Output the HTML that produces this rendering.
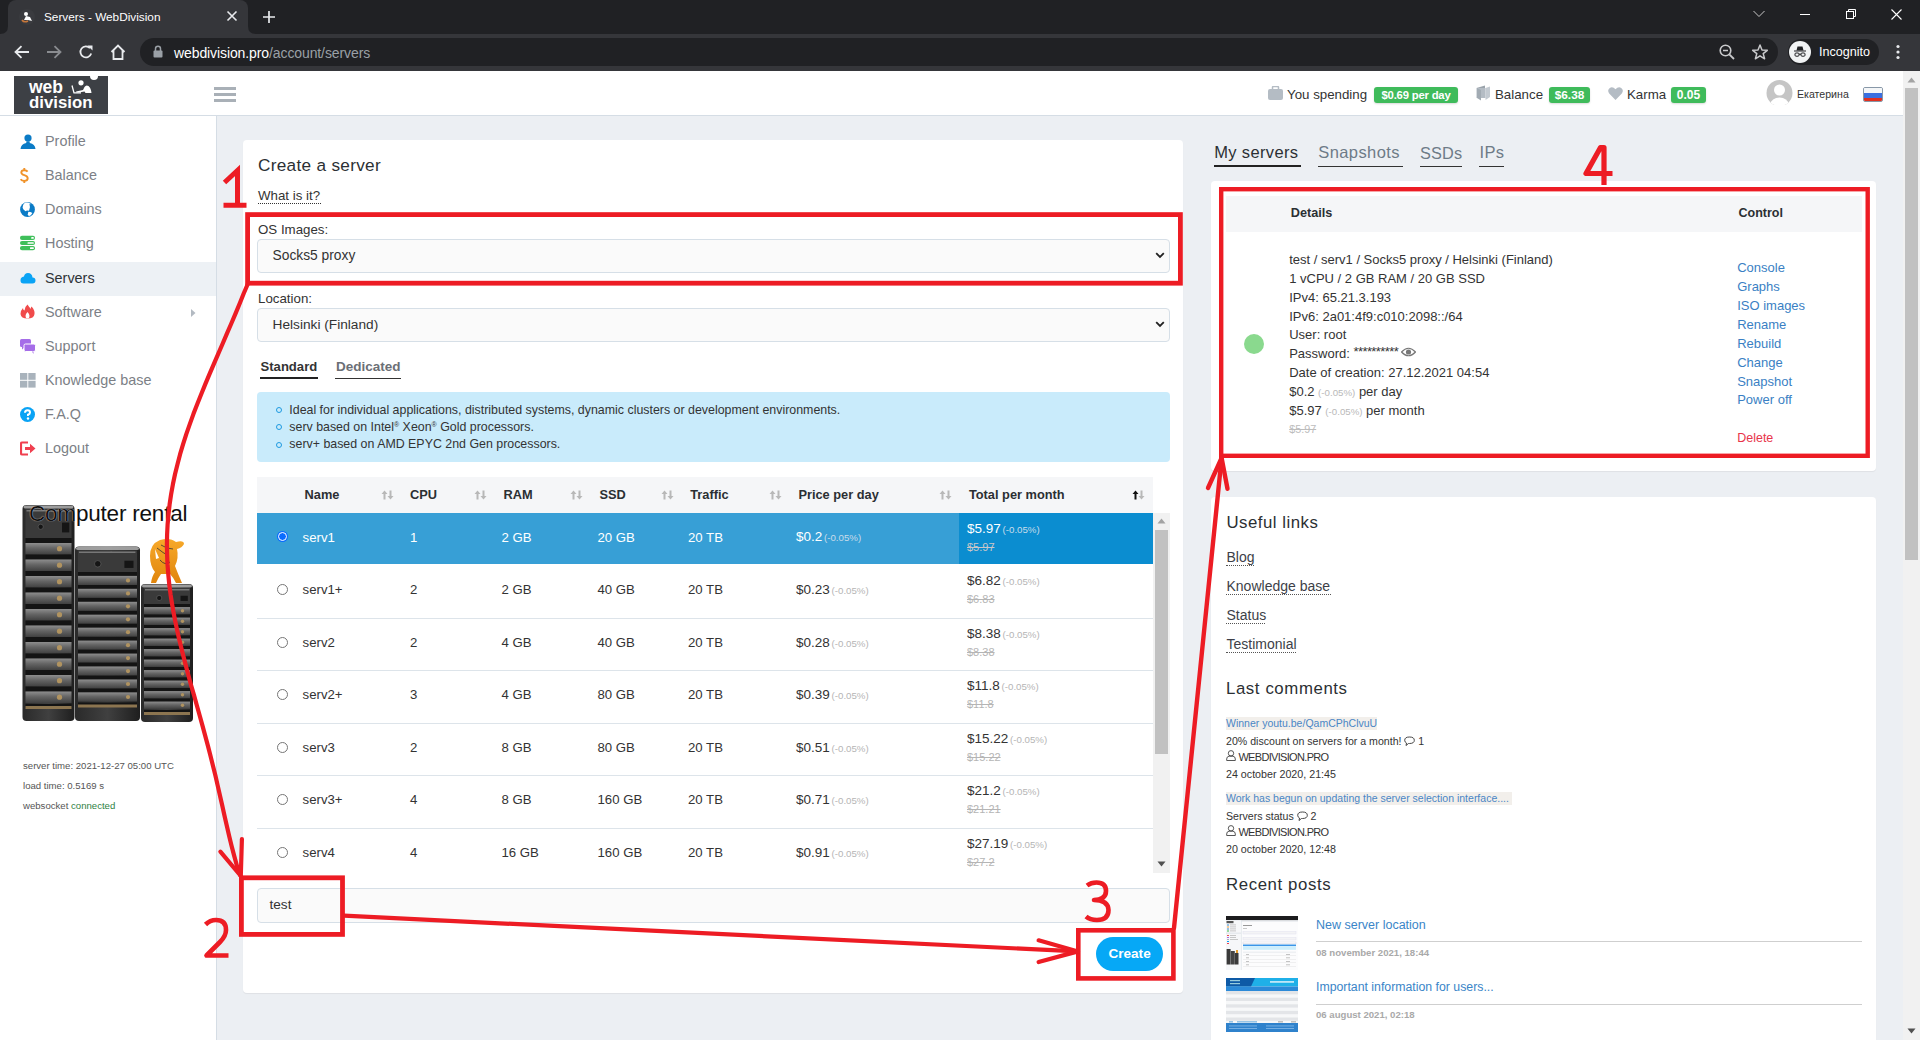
<!DOCTYPE html>
<html><head><meta charset="utf-8">
<style>
*{box-sizing:border-box;margin:0;padding:0}
html,body{width:1920px;height:1040px;overflow:hidden;font-family:"Liberation Sans",sans-serif;background:#eceff3;position:relative}
.a{position:absolute;white-space:nowrap}
/* chrome */
#tabbar{position:absolute;left:0;top:0;width:1920px;height:34px;background:#202124}
#tab{position:absolute;left:8px;top:0;width:240px;height:34px;background:#35363a;border-radius:8px 8px 0 0}
#toolbar{position:absolute;left:0;top:34px;width:1920px;height:37px;background:#35363a}
#url{position:absolute;left:140px;top:38px;width:1638px;height:28px;background:#202124;border-radius:14px}
#incog{position:absolute;left:1788px;top:39px;width:91px;height:26px;background:#202124;border-radius:13px}
/* page */
#header{position:absolute;left:0;top:71px;width:1903px;height:45px;background:#fff;border-bottom:1px solid #d5dde5}
#sidebar{position:absolute;left:0;top:116px;width:217px;height:924px;background:#fff;border-right:1px solid #d5dde5}
#pscroll{position:absolute;left:1903px;top:71px;width:17px;height:969px;background:#f1f1f1}
.sb{left:45px;font-size:14.4px;color:#7c7f86;line-height:16px}
.st{left:23px;font-size:9.6px;color:#555;line-height:11px}
.card{position:absolute;background:#fff;border-radius:4px;box-shadow:0 1px 1px rgba(0,0,0,.06)}
</style></head><body>
<div id="tabbar"></div>
<div id="tab"></div>
<svg class="a" style="left:0px;top:26px" width="8" height="8" viewBox="0 0 8 8"><path d="M0 8 Q8 8 8 0 V8Z" fill="#35363a"/></svg>
<svg class="a" style="left:248px;top:26px" width="8" height="8" viewBox="0 0 8 8"><path d="M8 8 Q0 8 0 0 V8Z" fill="#35363a"/></svg>
<div id="toolbar"></div>
<div id="url"></div>
<div id="incog"></div>

<!-- tab content -->
<svg class="a" style="left:18px;top:8px" width="18" height="18" viewBox="0 0 18 18">
 <circle cx="9" cy="9" r="8" fill="#3a3b3f"/>
 <path d="M4 12 Q6 15 10 13" stroke="#c7773a" stroke-width="1.6" fill="none"/>
 <circle cx="8" cy="6" r="2" fill="#fff"/>
 <path d="M6 12 L8 8 L12 9 L14 13 L10 12 Z" fill="#fff"/>
</svg>
<div class="a" style="left:44px;top:10px;font-size:11.8px;color:#fff">Servers - WebDivision</div>
<svg class="a" style="left:226px;top:10px" width="12" height="12" viewBox="0 0 12 12"><path d="M1.5 1.5L10.5 10.5M10.5 1.5L1.5 10.5" stroke="#e8eaed" stroke-width="1.6"/></svg>
<svg class="a" style="left:262px;top:10px" width="14" height="14" viewBox="0 0 14 14"><path d="M7 1V13M1 7H13" stroke="#e8eaed" stroke-width="1.7"/></svg>
<!-- window controls -->
<svg class="a" style="left:1752px;top:9px" width="14" height="10" viewBox="0 0 14 10"><path d="M1.5 2 L7 7.5 L12.5 2" stroke="#c8c8c8" stroke-width="1" fill="none"/></svg>
<div class="a" style="left:1800px;top:14px;width:10px;height:1px;background:#fff"></div>
<svg class="a" style="left:1845px;top:8px" width="12" height="12" viewBox="0 0 12 12"><rect x="1.5" y="3.5" width="7" height="7" stroke="#fff" fill="none" stroke-width="1"/><path d="M3.5 3.5V1.5H10.5V8.5H8.5" stroke="#fff" fill="none" stroke-width="1"/></svg>
<svg class="a" style="left:1890px;top:8px" width="13" height="13" viewBox="0 0 13 13"><path d="M1.5 1.5L11.5 11.5M11.5 1.5L1.5 11.5" stroke="#fff" stroke-width="1.1"/></svg>
<!-- toolbar icons -->
<svg class="a" style="left:13px;top:44px" width="18" height="16" viewBox="0 0 18 16"><path d="M16 8H3M8.5 2.2L2.5 8L8.5 13.8" stroke="#e8eaed" stroke-width="1.8" fill="none"/></svg>
<svg class="a" style="left:45px;top:44px" width="18" height="16" viewBox="0 0 18 16"><path d="M2 8H15M9.5 2.2L15.5 8L9.5 13.8" stroke="#8a8c90" stroke-width="1.8" fill="none"/></svg>
<svg class="a" style="left:78px;top:44px" width="16" height="16" viewBox="0 0 16 16"><path d="M13.2 9.5 A5.5 5.5 0 1 1 12 4.2" stroke="#e8eaed" stroke-width="1.8" fill="none"/><path d="M9.5 1.5 L14.5 1.5 L14.5 6.5 Z" fill="#e8eaed"/></svg>
<svg class="a" style="left:109px;top:43px" width="18" height="18" viewBox="0 0 18 18"><path d="M2.5 9 L9 2.5 L15.5 9 M4.5 7.5 V16 H13.5 V7.5" stroke="#e8eaed" stroke-width="1.8" fill="none" stroke-linejoin="miter"/></svg>
<svg class="a" style="left:153px;top:45px" width="10" height="13" viewBox="0 0 10 13"><rect x="0.5" y="5.5" width="9" height="7" rx="1" fill="#9aa0a6"/><path d="M2.5 6V3.8A2.5 2.5 0 0 1 7.5 3.8V6" stroke="#9aa0a6" stroke-width="1.5" fill="none"/></svg>
<div class="a" style="left:174px;top:45px;font-size:14px;color:#fff;letter-spacing:-0.1px">webdivision.pro<span style="color:#9aa0a6">/account/servers</span></div>
<svg class="a" style="left:1718px;top:43px" width="18" height="18" viewBox="0 0 18 18"><circle cx="7.5" cy="7.5" r="5.3" stroke="#c8c9cb" stroke-width="1.6" fill="none"/><path d="M11.3 11.3L16 16" stroke="#c8c9cb" stroke-width="1.8"/><path d="M5 7.5H10" stroke="#c8c9cb" stroke-width="1.5"/></svg>
<svg class="a" style="left:1751px;top:43px" width="18" height="18" viewBox="0 0 18 18"><path d="M9 2 L11 7 L16.3 7.3 L12.2 10.6 L13.6 15.8 L9 12.8 L4.4 15.8 L5.8 10.6 L1.7 7.3 L7 7 Z" stroke="#c8c9cb" stroke-width="1.5" fill="none" stroke-linejoin="round"/></svg>
<svg class="a" style="left:1789px;top:41px" width="22" height="22" viewBox="0 0 22 22"><circle cx="11" cy="11" r="11" fill="#f1f3f4"/><path d="M7.5 9.5 L8.5 5.5 H13.5 L14.5 9.5Z" fill="#202124"/><path d="M5 10H17" stroke="#202124" stroke-width="1"/><rect x="6" y="12" width="4" height="3.2" rx="1" stroke="#202124" fill="none" stroke-width="1"/><rect x="12" y="12" width="4" height="3.2" rx="1" stroke="#202124" fill="none" stroke-width="1"/><path d="M10 13.2H12" stroke="#202124" stroke-width="1"/></svg>
<div class="a" style="left:1819px;top:45px;font-size:12.6px;color:#fff">Incognito</div>
<svg class="a" style="left:1895px;top:44px" width="6" height="16" viewBox="0 0 6 16"><circle cx="3" cy="2.5" r="1.6" fill="#e8eaed"/><circle cx="3" cy="8" r="1.6" fill="#e8eaed"/><circle cx="3" cy="13.5" r="1.6" fill="#e8eaed"/></svg>
<div id="header"></div>
<div id="sidebar"></div>
<div class="a" style="left:0;top:262px;width:216px;height:34px;background:#edf1f5"></div>
<svg class="a" style="left:20px;top:134px" width="16" height="15" viewBox="0 0 16 15"><circle cx="8" cy="4" r="3.6" fill="#0b7bc6"/><path d="M6.5 7.2 H9.5 L9.8 9 Q15 10 15.5 15 H0.5 Q1 10 6.2 9Z" fill="#0b7bc6"/></svg>
<svg class="a" style="left:19px;top:167px" width="11" height="17" viewBox="0 0 11 17"><path d="M8.6 4.6 Q7.6 3.2 5.3 3.2 Q2.3 3.2 2.3 5.6 Q2.3 7.3 5.3 8.2 Q8.7 9.2 8.7 11.3 Q8.7 13.9 5.3 13.9 Q2.8 13.9 1.6 12.2" stroke="#f0932b" stroke-width="1.9" fill="none"/><path d="M5.3 1 V3.2 M5.3 13.9 V16" stroke="#f0932b" stroke-width="1.9"/></svg>
<svg class="a" style="left:20px;top:202px" width="15" height="15" viewBox="0 0 15 15"><circle cx="7.5" cy="7.5" r="7.4" fill="#0b7bc6"/><path d="M5.5 0.6 L8 0.5 L10.7 1.7 L9.6 3.5 L10 5 L9 8.7 L7 8.6 L5.5 9.2 L3.5 7.5 L2.6 5.8 L3 3.5 L3.8 1.7Z" fill="#fff"/><path d="M8.4 9.8 L10.5 10 L12.4 11 L11.2 12.8 L10.1 13.8 L8.6 14 L7.8 12.2Z" fill="#fff"/><path d="M9 1.8 L10.6 2.5 L10.2 3.6Z" fill="#0b7bc6"/></svg>
<svg class="a" style="left:20px;top:235px" width="15" height="16" viewBox="0 0 15 16"><rect x="0" y="0.8" width="15" height="4.2" rx="2" fill="#3fbf5a"/><rect x="0" y="6" width="15" height="4" rx="2" fill="#3fbf5a"/><rect x="0" y="11" width="15" height="4.2" rx="2" fill="#3fbf5a"/><rect x="11.2" y="2" width="2.6" height="1.8" rx=".6" fill="#fff"/><rect x="7.5" y="7.2" width="6.3" height="1.6" rx=".6" fill="#fff"/><rect x="10" y="12.2" width="3.8" height="1.8" rx=".6" fill="#fff"/></svg>
<svg class="a" style="left:20px;top:272px" width="16" height="12" viewBox="0 0 16 12"><path d="M3.5 11.5 H12.5 Q15.5 11.5 15.5 8.5 Q15.5 5.5 12.5 5.5 Q12 1 8 1 Q4.5 1 4 4.5 Q0.5 5 0.5 8.2 Q0.5 11.5 3.5 11.5Z" fill="#0aa3f5"/></svg>
<svg class="a" style="left:20px;top:304px" width="15" height="15" viewBox="0 0 15 15"><path d="M7.5 0.5 Q9 3 11 5 Q10.5 3.5 11.5 2.5 Q15 6 14.5 10 Q14 14.5 7.5 14.5 Q1 14.5 0.5 10 Q0.5 6.5 3 4 Q3 6 4.5 6.5 Q4.5 3 7.5 0.5Z" fill="#f04b4b"/><path d="M7.5 8 Q9.5 10 9.5 12 Q9.5 14.5 7.5 14.5 Q5.5 14.5 5.5 12 Q5.5 10 7.5 8Z" fill="#fff"/></svg>
<svg class="a" style="left:20px;top:339px" width="16" height="16" viewBox="0 0 16 16"><rect x="0" y="0" width="11" height="8" rx="1.5" fill="#a56de8"/><path d="M2 8 L2 10.5 L5 8Z" fill="#a56de8"/><rect x="4" y="5" width="11.5" height="7.5" rx="1.5" fill="#a56de8" stroke="#fff" stroke-width="1"/><path d="M12 12.5 L13.5 15 L13.5 12.5Z" fill="#a56de8"/></svg>
<svg class="a" style="left:20px;top:373px" width="16" height="15" viewBox="0 0 16 15"><rect x="0" y="0" width="7.3" height="6.8" fill="#a9b3bc"/><rect x="8.3" y="0" width="7.3" height="6.8" fill="#a9b3bc"/><rect x="0" y="7.8" width="7.3" height="6.8" fill="#a9b3bc"/><rect x="8.3" y="7.8" width="7.3" height="6.8" fill="#a9b3bc"/></svg>
<svg class="a" style="left:20px;top:407px" width="15" height="15" viewBox="0 0 15 15"><circle cx="7.5" cy="7.5" r="7.5" fill="#0aa3f5"/><path d="M5 5.8 Q5 3.3 7.5 3.3 Q10 3.3 10 5.5 Q10 7 8 7.8 V9" stroke="#fff" stroke-width="2" fill="none"/><circle cx="8" cy="11.5" r="1.2" fill="#fff"/></svg>
<svg class="a" style="left:20px;top:441px" width="16" height="15" viewBox="0 0 16 15"><path d="M8 1.5 H2 Q1 1.5 1 2.5 V12.5 Q1 13.5 2 13.5 H8" stroke="#f04050" stroke-width="2.2" fill="none"/><path d="M5 6 H10 V2.8 L15.5 7.5 L10 12.2 V9 H5Z" fill="#f04050"/></svg>
<div class="a sb" style="top:133px">Profile</div>
<div class="a sb" style="top:167px">Balance</div>
<div class="a sb" style="top:201px">Domains</div>
<div class="a sb" style="top:235px">Hosting</div>
<div class="a sb" style="top:270px;color:#2f3338">Servers</div>
<div class="a sb" style="top:304px">Software</div>
<svg class="a" style="left:190px;top:308px" width="6" height="10" viewBox="0 0 6 10"><path d="M1 1 L5.5 5 L1 9Z" fill="#b3bac2"/></svg>
<div class="a sb" style="top:338px">Support</div>
<div class="a sb" style="top:372px">Knowledge base</div>
<div class="a sb" style="top:406px">F.A.Q</div>
<div class="a sb" style="top:440px">Logout</div>
<svg class="a" style="left:20px;top:500px" width="180" height="225" viewBox="20 500 180 225"><defs><linearGradient id="rackg" x1="0" x2="1"><stop offset="0" stop-color="#2a2a2a"/><stop offset=".5" stop-color="#404040"/><stop offset="1" stop-color="#1e1e1e"/></linearGradient><linearGradient id="slatg" x1="0" x2="0" y1="0" y2="1"><stop offset="0" stop-color="#8e8e8e"/><stop offset=".45" stop-color="#656565"/><stop offset="1" stop-color="#404040"/></linearGradient><linearGradient id="catg" x1="0" x2="0" y1="0" y2="1"><stop offset="0" stop-color="#f7a92a"/><stop offset="1" stop-color="#e0850c"/></linearGradient></defs><g><rect x="141" y="584" width="52" height="138" rx="4" fill="url(#rackg)"/><rect x="142" y="584.5" width="50" height="3" rx="2" fill="#b0b0b0" opacity=".85"/><rect x="144" y="588" width="46" height="16" fill="#3a3a3a"/><rect x="145" y="589" width="26.0" height="1.5" fill="#777"/><rect x="169.6" y="589" width="19.76" height="1.5" fill="#777"/><circle cx="159.2" cy="598.0" r="2.6" fill="#151515" stroke="#666" stroke-width=".6"/><rect x="180.52" y="595.75" width="7.280000000000001" height="5.25" fill="#151515"/><rect x="144" y="604.0" width="46" height="3.1" fill="#141414"/><rect x="144" y="607.1" width="46" height="7.3" fill="url(#slatg)"/><circle cx="182.5" cy="610.8" r="1.7" fill="#b09360"/><rect x="144" y="614.5" width="46" height="3.1" fill="#141414"/><rect x="144" y="617.6" width="46" height="7.3" fill="url(#slatg)"/><circle cx="182.5" cy="621.3" r="1.7" fill="#b09360"/><rect x="144" y="625.0" width="46" height="3.1" fill="#141414"/><rect x="144" y="628.1" width="46" height="7.3" fill="url(#slatg)"/><circle cx="182.5" cy="631.8" r="1.7" fill="#b09360"/><rect x="144" y="635.5" width="46" height="3.1" fill="#141414"/><rect x="144" y="638.6" width="46" height="7.3" fill="url(#slatg)"/><circle cx="182.5" cy="642.3" r="1.7" fill="#b09360"/><rect x="144" y="646.0" width="46" height="3.1" fill="#141414"/><rect x="144" y="649.1" width="46" height="7.3" fill="url(#slatg)"/><circle cx="182.5" cy="652.8" r="1.7" fill="#b09360"/><rect x="144" y="656.5" width="46" height="3.1" fill="#141414"/><rect x="144" y="659.6" width="46" height="7.3" fill="url(#slatg)"/><circle cx="182.5" cy="663.3" r="1.7" fill="#b09360"/><rect x="144" y="667.0" width="46" height="3.1" fill="#141414"/><rect x="144" y="670.1" width="46" height="7.3" fill="url(#slatg)"/><circle cx="182.5" cy="673.8" r="1.7" fill="#b09360"/><rect x="144" y="677.5" width="46" height="3.1" fill="#141414"/><rect x="144" y="680.6" width="46" height="7.3" fill="url(#slatg)"/><circle cx="182.5" cy="684.3" r="1.7" fill="#b09360"/><rect x="144" y="688.0" width="46" height="3.1" fill="#141414"/><rect x="144" y="691.1" width="46" height="7.3" fill="url(#slatg)"/><circle cx="182.5" cy="694.8" r="1.7" fill="#b09360"/><rect x="144" y="698.5" width="46" height="3.1" fill="#141414"/><rect x="144" y="701.6" width="46" height="7.3" fill="url(#slatg)"/><circle cx="182.5" cy="705.3" r="1.7" fill="#b09360"/><rect x="144" y="710" width="46" height="2.3" fill="#141414"/><rect x="144" y="712" width="46" height="3" fill="#8c7550"/></g><g><rect x="75" y="546.5" width="65" height="174.5" rx="4" fill="url(#rackg)"/><rect x="76" y="547.0" width="63" height="3" rx="2" fill="#b0b0b0" opacity=".85"/><rect x="78" y="550.5" width="59" height="21.5" fill="#3a3a3a"/><rect x="79" y="551.5" width="32.5" height="1.5" fill="#777"/><rect x="110.75" y="551.5" width="24.7" height="1.5" fill="#777"/><circle cx="97.75" cy="563.8" r="3.25" fill="#151515" stroke="#666" stroke-width=".6"/><rect x="124.4" y="560.725" width="9.100000000000001" height="7.175" fill="#151515"/><rect x="78" y="572.0" width="59" height="3.9" fill="#141414"/><rect x="78" y="575.9" width="59" height="9.1" fill="url(#slatg)"/><circle cx="128" cy="580.4" r="2.1" fill="#b09360"/><rect x="78" y="585.0" width="59" height="3.9" fill="#141414"/><rect x="78" y="588.8" width="59" height="9.1" fill="url(#slatg)"/><circle cx="128" cy="593.4" r="2.1" fill="#b09360"/><rect x="78" y="597.9" width="59" height="3.9" fill="#141414"/><rect x="78" y="601.8" width="59" height="9.1" fill="url(#slatg)"/><circle cx="128" cy="606.3" r="2.1" fill="#b09360"/><rect x="78" y="610.9" width="59" height="3.9" fill="#141414"/><rect x="78" y="614.7" width="59" height="9.1" fill="url(#slatg)"/><circle cx="128" cy="619.3" r="2.1" fill="#b09360"/><rect x="78" y="623.8" width="59" height="3.9" fill="#141414"/><rect x="78" y="627.7" width="59" height="9.1" fill="url(#slatg)"/><circle cx="128" cy="632.2" r="2.1" fill="#b09360"/><rect x="78" y="636.8" width="59" height="3.9" fill="#141414"/><rect x="78" y="640.6" width="59" height="9.1" fill="url(#slatg)"/><circle cx="128" cy="645.2" r="2.1" fill="#b09360"/><rect x="78" y="649.7" width="59" height="3.9" fill="#141414"/><rect x="78" y="653.6" width="59" height="9.1" fill="url(#slatg)"/><circle cx="128" cy="658.1" r="2.1" fill="#b09360"/><rect x="78" y="662.6" width="59" height="3.9" fill="#141414"/><rect x="78" y="666.5" width="59" height="9.1" fill="url(#slatg)"/><circle cx="128" cy="671.1" r="2.1" fill="#b09360"/><rect x="78" y="675.6" width="59" height="3.9" fill="#141414"/><rect x="78" y="679.5" width="59" height="9.1" fill="url(#slatg)"/><circle cx="128" cy="684.0" r="2.1" fill="#b09360"/><rect x="78" y="688.5" width="59" height="3.9" fill="#141414"/><rect x="78" y="692.4" width="59" height="9.1" fill="url(#slatg)"/><circle cx="128" cy="697.0" r="2.1" fill="#b09360"/><rect x="78" y="702.5" width="59" height="3.5" fill="#141414"/><rect x="78" y="704.5" width="59" height="3" fill="#8c7550"/></g><g><rect x="22.5" y="505" width="52" height="216" rx="4" fill="url(#rackg)"/><rect x="23.5" y="505.5" width="50" height="3" rx="2" fill="#b0b0b0" opacity=".85"/><rect x="25.5" y="509" width="46" height="29" fill="#3a3a3a"/><rect x="26.5" y="510" width="26.0" height="1.5" fill="#777"/><rect x="51.1" y="510" width="19.76" height="1.5" fill="#777"/><circle cx="40.7" cy="526.8" r="2.6" fill="#151515" stroke="#666" stroke-width=".6"/><rect x="62.02" y="522.6" width="7.280000000000001" height="9.799999999999999" fill="#151515"/><rect x="25.5" y="538.0" width="46" height="5.0" fill="#141414"/><rect x="25.5" y="543.0" width="46" height="11.5" fill="url(#slatg)"/><circle cx="59.5" cy="548.7" r="2.6" fill="#b09360"/><rect x="25.5" y="554.5" width="46" height="5.0" fill="#141414"/><rect x="25.5" y="559.5" width="46" height="11.5" fill="url(#slatg)"/><circle cx="59.5" cy="565.2" r="2.6" fill="#b09360"/><rect x="25.5" y="571.0" width="46" height="5.0" fill="#141414"/><rect x="25.5" y="576.0" width="46" height="11.5" fill="url(#slatg)"/><circle cx="59.5" cy="581.7" r="2.6" fill="#b09360"/><rect x="25.5" y="587.5" width="46" height="5.0" fill="#141414"/><rect x="25.5" y="592.5" width="46" height="11.5" fill="url(#slatg)"/><circle cx="59.5" cy="598.2" r="2.6" fill="#b09360"/><rect x="25.5" y="604.0" width="46" height="5.0" fill="#141414"/><rect x="25.5" y="609.0" width="46" height="11.5" fill="url(#slatg)"/><circle cx="59.5" cy="614.7" r="2.6" fill="#b09360"/><rect x="25.5" y="620.5" width="46" height="5.0" fill="#141414"/><rect x="25.5" y="625.5" width="46" height="11.5" fill="url(#slatg)"/><circle cx="59.5" cy="631.2" r="2.6" fill="#b09360"/><rect x="25.5" y="637.0" width="46" height="5.0" fill="#141414"/><rect x="25.5" y="642.0" width="46" height="11.5" fill="url(#slatg)"/><circle cx="59.5" cy="647.7" r="2.6" fill="#b09360"/><rect x="25.5" y="653.5" width="46" height="5.0" fill="#141414"/><rect x="25.5" y="658.5" width="46" height="11.5" fill="url(#slatg)"/><circle cx="59.5" cy="664.2" r="2.6" fill="#b09360"/><rect x="25.5" y="670.0" width="46" height="5.0" fill="#141414"/><rect x="25.5" y="675.0" width="46" height="11.5" fill="url(#slatg)"/><circle cx="59.5" cy="680.7" r="2.6" fill="#b09360"/><rect x="25.5" y="686.5" width="46" height="5.0" fill="#141414"/><rect x="25.5" y="691.5" width="46" height="11.5" fill="url(#slatg)"/><circle cx="59.5" cy="697.2" r="2.6" fill="#b09360"/><rect x="25.5" y="704" width="46" height="3.2" fill="#141414"/><rect x="25.5" y="706" width="46" height="3" fill="#8c7550"/></g><path d="M151 583 Q152 576 155 572 Q150 566 150 556 Q150 544 160 540 Q170 537 176 542 Q184 540 184 544 Q182 548 177 549 Q179 558 175 566 Q178 574 182 583 L176 583 Q173 577 170 574 L161 574 Q158 578 156 583 Z" fill="url(#catg)"/><path d="M157 548 Q163 553 169 556 M161 545 Q167 549 173 549 M160 560 Q165 566 170 562" stroke="#333" stroke-width=".8" fill="none"/><path d="M155 549 L159 558 L156 559Z" fill="#fff"/></svg><div class="a" style="left:29px;top:502px;font-size:22.5px;line-height:24px;color:#111;letter-spacing:-0.2px;text-shadow:0 0 1px #fff">Computer rental</div>
<div class="a st" style="top:760px">server time: 2021-12-27 05:00 UTC</div>
<div class="a st" style="top:780px">load time: 0.5169 s</div>
<div class="a st" style="top:800px">websocket <span style="color:#2f8243">connected</span></div>

<div id="pscroll"></div>
<div class="a" style="left:1905px;top:88px;width:13px;height:472px;background:#c1c1c1"></div>
<svg class="a" style="left:1907px;top:77px" width="9" height="6" viewBox="0 0 9 6"><path d="M0.5 5.5 L4.5 0.5 L8.5 5.5Z" fill="#a3a3a3"/></svg>
<svg class="a" style="left:1907px;top:1028px" width="9" height="6" viewBox="0 0 9 6"><path d="M0.5 0.5 L4.5 5.5 L8.5 0.5Z" fill="#505050"/></svg>
<!-- header content -->
<div class="a" style="left:14px;top:76px;width:94px;height:38px;background:#3d4045"></div>
<div class="a" style="left:90px;top:72px;width:8px;height:8px;border-radius:50%;background:#fff"></div>
<div class="a" style="left:29px;top:79px;font-size:17.5px;font-weight:bold;color:#fff;line-height:17px">web</div>
<div class="a" style="left:29px;top:93.5px;font-size:16.8px;font-weight:bold;color:#fff;line-height:17px">division</div>
<svg class="a" style="left:71px;top:80px" width="22" height="15" viewBox="0 0 22 15"><circle cx="10" cy="2.8" r="2.6" fill="#fff"/><path d="M1 5.5 L3 12.8 H10" stroke="#fff" stroke-width="1.3" fill="none"/><path d="M5 11.5 L12 10 L13.5 7 Q15 4.5 17.5 6 Q20 8 20.5 13 H14.5 L13.5 11.5 Q9 12.5 5.5 12.5Z" fill="#fff"/></svg>
<div class="a" style="left:214px;top:87px;width:22px;height:3px;background:#a9b0b7"></div>
<div class="a" style="left:214px;top:93px;width:22px;height:3px;background:#a9b0b7"></div>
<div class="a" style="left:214px;top:99px;width:22px;height:3px;background:#a9b0b7"></div>
<svg class="a" style="left:1268px;top:86px" width="15" height="14" viewBox="0 0 15 14"><rect x="0" y="3" width="15" height="11" rx="2" fill="#b4bcc4"/><rect x="4.5" y="0.5" width="6" height="3.5" rx="1" stroke="#b4bcc4" stroke-width="1.5" fill="none"/></svg>
<div class="a" style="left:1287px;top:87px;font-size:13.3px;color:#333">You spending</div>
<div class="a" style="left:1374px;top:87px;width:84px;height:16px;border-radius:3px;background:#3fbb5b;box-shadow:0 1px 2px rgba(0,0,0,.15);color:#fff;font-weight:bold;font-size:11.3px;line-height:16px;text-align:center;letter-spacing:-0.2px">$0.69 per day</div>
<svg class="a" style="left:1476px;top:85px" width="15" height="16" viewBox="0 0 15 16"><path d="M0.5 3 L9 0.5 L9 3 Z" fill="#9aa3ab"/><rect x="0.5" y="3" width="9" height="10" fill="#b4bcc4"/><path d="M9.5 3 L14 1.5 V12 L9.5 15 Z" fill="#c3cad1"/><path d="M1 13 L5 15.5 V5 L1 3Z" fill="#a2abb3"/></svg>
<div class="a" style="left:1495px;top:87px;font-size:13.3px;color:#333">Balance</div>
<div class="a" style="left:1549px;top:87px;width:41px;height:16px;border-radius:3px;background:#3fbb5b;box-shadow:0 1px 2px rgba(0,0,0,.15);color:#fff;font-weight:bold;font-size:11.8px;line-height:16px;text-align:center">$6.38</div>
<svg class="a" style="left:1608px;top:87px" width="15" height="13" viewBox="0 0 15 13"><path d="M7.5 13 L1.2 6.5 Q-1 3.5 1.5 1.2 Q4.5 -1 7.5 2.3 Q10.5 -1 13.5 1.2 Q16 3.5 13.8 6.5 Z" fill="#b4bcc4"/></svg>
<div class="a" style="left:1627px;top:87px;font-size:13.3px;color:#333">Karma</div>
<div class="a" style="left:1671px;top:87px;width:35px;height:16px;border-radius:3px;background:#3fbb5b;box-shadow:0 1px 2px rgba(0,0,0,.15);color:#fff;font-weight:bold;font-size:12px;line-height:16px;text-align:center">0.05</div>
<svg class="a" style="left:1766px;top:80px" width="27" height="25" viewBox="0 0 27 25"><defs><clipPath id="avc"><circle cx="13.5" cy="13" r="13"/></clipPath></defs><circle cx="13.5" cy="13" r="13" fill="#c5c5c5"/><g clip-path="url(#avc)"><circle cx="13.5" cy="10" r="5.5" fill="#fff"/><ellipse cx="13.5" cy="24" rx="9" ry="6.5" fill="#fff"/></g></svg>
<div class="a" style="left:1797px;top:88px;font-size:10.6px;color:#333">Екатерина</div>
<div class="a" style="left:1863px;top:87px;width:20px;height:15px;border-radius:2px;overflow:hidden;border:1px solid #8898a8"><div style="height:4.5px;background:#f4f6f8"></div><div style="height:5px;background:#3a6fe0"></div><div style="height:5px;background:#e03020"></div></div>

<div class="card" style="left:243px;top:140px;width:940px;height:853px"></div>
<div class="card" style="left:1211px;top:181px;width:665px;height:290px"></div>
<div class="card" style="left:1211px;top:497px;width:665px;height:560px"></div>
<!--MAIN-->
<div class="a" style="left:258px;top:156.88px;font-size:17.2px;line-height:17.2px;color:#2b2f33;font-weight:400;letter-spacing:0.3px">Create a server</div>
<div class="a" style="left:258px;top:188.89px;font-size:13.3px;line-height:13.3px;color:#333;font-weight:400;">What is it?</div>
<div class="a" style="left:258px;top:203px;width:63px;height:1px;background:transparent;border-top:1px dotted #333"></div>
<div class="a" style="left:258px;top:222.69px;font-size:13.3px;line-height:13.3px;color:#333;font-weight:400;">OS Images:</div>
<div class="a" style="left:257px;top:239px;width:913px;height:34px;background:#fafafa;border:1px solid #d6dfe7;border-radius:4px"></div>
<div class="a" style="left:272.5px;top:248.77px;font-size:13.8px;line-height:13.8px;color:#333;font-weight:400;">Socks5 proxy</div>
<svg class="a" style="left:1155px;top:252px" width="10" height="7" viewBox="0 0 10 7"><path d="M1.2 1.2 L5 5 L8.8 1.2" stroke="#222" stroke-width="1.8" fill="none"/></svg>
<div class="a" style="left:258px;top:291.69px;font-size:13.3px;line-height:13.3px;color:#333;font-weight:400;">Location:</div>
<div class="a" style="left:257px;top:308px;width:913px;height:34px;background:#fafafa;border:1px solid #d6dfe7;border-radius:4px"></div>
<div class="a" style="left:272.5px;top:318.36px;font-size:13.7px;line-height:13.7px;color:#333;font-weight:400;">Helsinki (Finland)</div>
<svg class="a" style="left:1155px;top:321px" width="10" height="7" viewBox="0 0 10 7"><path d="M1.2 1.2 L5 5 L8.8 1.2" stroke="#222" stroke-width="1.8" fill="none"/></svg>
<div class="a" style="left:260.5px;top:359.87px;font-size:13.1px;line-height:13.1px;color:#333;font-weight:700;">Standard</div>
<div class="a" style="left:260px;top:377px;width:58px;height:2px;background:#222;"></div>
<div class="a" style="left:336px;top:359.52px;font-size:13.5px;line-height:13.5px;color:#6b6f76;font-weight:700;">Dedicated</div>
<div class="a" style="left:335px;top:378px;width:66px;height:1px;background:#333;"></div>
<div class="a" style="left:257px;top:392px;width:913px;height:70px;background:#c9ebfb;border-radius:4px"></div>
<div class="a" style="left:276px;top:407.0px;width:6px;height:6px;border:1.5px solid #1e9ae0;border-radius:50%"></div>
<div class="a" style="left:289.3px;top:403.96px;font-size:12.4px;line-height:12.4px;color:#333;font-weight:400;">Ideal for individual applications, distributed systems, dynamic clusters or development environments.</div>
<div class="a" style="left:276px;top:424.0px;width:6px;height:6px;border:1.5px solid #1e9ae0;border-radius:50%"></div>
<div class="a" style="left:289.3px;top:420.96px;font-size:12.4px;line-height:12.4px;color:#333;font-weight:400;">serv based on Intel<span style="font-size:7px;position:relative;top:-4px">®</span> Xeon<span style="font-size:7px;position:relative;top:-4px">®</span> Gold processors.</div>
<div class="a" style="left:276px;top:441.5px;width:6px;height:6px;border:1.5px solid #1e9ae0;border-radius:50%"></div>
<div class="a" style="left:289.3px;top:438.46px;font-size:12.4px;line-height:12.4px;color:#333;font-weight:400;">serv+ based on AMD EPYC 2nd Gen processors.</div>
<div class="a" style="left:257px;top:477px;width:896px;height:36px;background:#f5f6f8;"></div>
<div class="a" style="left:304.6px;top:488.62px;font-size:12.8px;line-height:12.8px;color:#2b2f33;font-weight:700;">Name</div>
<svg class="a" style="left:380.5px;top:490px" width="13" height="10" viewBox="0 0 13 10"><path d="M3.5 0.5 L6.5 4 H4.5 V9.5 H2.5 V4 H0.5Z" fill="#b8b8b8"/><path d="M9.5 9.5 L12.5 6 H10.5 V0.5 H8.5 V6 H6.5Z" fill="#b8b8b8"/></svg>
<div class="a" style="left:410px;top:488.62px;font-size:12.8px;line-height:12.8px;color:#2b2f33;font-weight:700;">CPU</div>
<svg class="a" style="left:474px;top:490px" width="13" height="10" viewBox="0 0 13 10"><path d="M3.5 0.5 L6.5 4 H4.5 V9.5 H2.5 V4 H0.5Z" fill="#b8b8b8"/><path d="M9.5 9.5 L12.5 6 H10.5 V0.5 H8.5 V6 H6.5Z" fill="#b8b8b8"/></svg>
<div class="a" style="left:503.5px;top:488.62px;font-size:12.8px;line-height:12.8px;color:#2b2f33;font-weight:700;">RAM</div>
<svg class="a" style="left:569.5px;top:490px" width="13" height="10" viewBox="0 0 13 10"><path d="M3.5 0.5 L6.5 4 H4.5 V9.5 H2.5 V4 H0.5Z" fill="#b8b8b8"/><path d="M9.5 9.5 L12.5 6 H10.5 V0.5 H8.5 V6 H6.5Z" fill="#b8b8b8"/></svg>
<div class="a" style="left:599.4px;top:488.62px;font-size:12.8px;line-height:12.8px;color:#2b2f33;font-weight:700;">SSD</div>
<svg class="a" style="left:660.5px;top:490px" width="13" height="10" viewBox="0 0 13 10"><path d="M3.5 0.5 L6.5 4 H4.5 V9.5 H2.5 V4 H0.5Z" fill="#b8b8b8"/><path d="M9.5 9.5 L12.5 6 H10.5 V0.5 H8.5 V6 H6.5Z" fill="#b8b8b8"/></svg>
<div class="a" style="left:690.2px;top:488.62px;font-size:12.8px;line-height:12.8px;color:#2b2f33;font-weight:700;">Traffic</div>
<svg class="a" style="left:769px;top:490px" width="13" height="10" viewBox="0 0 13 10"><path d="M3.5 0.5 L6.5 4 H4.5 V9.5 H2.5 V4 H0.5Z" fill="#b8b8b8"/><path d="M9.5 9.5 L12.5 6 H10.5 V0.5 H8.5 V6 H6.5Z" fill="#b8b8b8"/></svg>
<div class="a" style="left:798.4px;top:488.62px;font-size:12.8px;line-height:12.8px;color:#2b2f33;font-weight:700;">Price per day</div>
<svg class="a" style="left:939px;top:490px" width="13" height="10" viewBox="0 0 13 10"><path d="M3.5 0.5 L6.5 4 H4.5 V9.5 H2.5 V4 H0.5Z" fill="#b8b8b8"/><path d="M9.5 9.5 L12.5 6 H10.5 V0.5 H8.5 V6 H6.5Z" fill="#b8b8b8"/></svg>
<div class="a" style="left:968.9px;top:488.62px;font-size:12.8px;line-height:12.8px;color:#2b2f33;font-weight:700;">Total per month</div>
<svg class="a" style="left:1132px;top:490px" width="13" height="10" viewBox="0 0 13 10"><path d="M3.5 0.5 L6.5 4 H4.5 V9.5 H2.5 V4 H0.5Z" fill="#111"/><path d="M9.5 9.5 L12.5 6 H10.5 V0.5 H8.5 V6 H6.5Z" fill="#b8b8b8"/></svg>
<div class="a" style="left:257px;top:513px;width:896px;height:360px;overflow:hidden;background:#fff">
<div class="a" style="left:0px;top:0px;width:896px;height:51px;background:#379fd6;"></div>
<div class="a" style="left:701.5px;top:0px;width:194.5px;height:51px;background:#0b8dd0;"></div>
<div class="a" style="left:20.5px;top:18.5px;width:9px;height:9px;border-radius:50%;background:#0a6cff;border:1.5px solid #fff;box-shadow:0 0 0 1px #0a6cff"></div>
<div class="a" style="left:45.6px;top:17.58px;font-size:13.2px;line-height:13.2px;color:#fff;font-weight:400;">serv1</div>
<div class="a" style="left:153px;top:17.58px;font-size:13.2px;line-height:13.2px;color:#fff;font-weight:400;">1</div>
<div class="a" style="left:244.5px;top:17.58px;font-size:13.2px;line-height:13.2px;color:#fff;font-weight:400;">2 GB</div>
<div class="a" style="left:340.5px;top:17.58px;font-size:13.2px;line-height:13.2px;color:#fff;font-weight:400;">20 GB</div>
<div class="a" style="left:431px;top:17.58px;font-size:13.2px;line-height:13.2px;color:#fff;font-weight:400;">20 TB</div>
<div class="a" style="left:539px;top:17.33px;font-size:13.5px;line-height:13.5px;color:#fff">$0.2 <span style="font-size:9.7px;color:#c9dcea;margin-left:-2px">(-0.05%)</span></div>
<div class="a" style="left:710px;top:8.53px;font-size:13.5px;line-height:13.5px;color:#fff">$5.97 <span style="font-size:9.7px;color:#c9dcea;margin-left:-2px">(-0.05%)</span></div>
<div class="a" style="left:710px;top:28.65px;font-size:11px;line-height:11px;color:#c9c6c8;text-decoration:line-through">$5.97</div>
<div class="a" style="left:20px;top:71.2px;width:11px;height:11px;border-radius:50%;background:#fff;border:1px solid #767676"></div>
<div class="a" style="left:45.6px;top:70.28px;font-size:13.2px;line-height:13.2px;color:#333;font-weight:400;">serv1+</div>
<div class="a" style="left:153px;top:70.28px;font-size:13.2px;line-height:13.2px;color:#333;font-weight:400;">2</div>
<div class="a" style="left:244.5px;top:70.28px;font-size:13.2px;line-height:13.2px;color:#333;font-weight:400;">2 GB</div>
<div class="a" style="left:340.5px;top:70.28px;font-size:13.2px;line-height:13.2px;color:#333;font-weight:400;">40 GB</div>
<div class="a" style="left:431px;top:70.28px;font-size:13.2px;line-height:13.2px;color:#333;font-weight:400;">20 TB</div>
<div class="a" style="left:539px;top:70.03px;font-size:13.5px;line-height:13.5px;color:#333">$0.23 <span style="font-size:9.7px;color:#b5b5b5;margin-left:-2px">(-0.05%)</span></div>
<div class="a" style="left:710px;top:61.23px;font-size:13.5px;line-height:13.5px;color:#333">$6.82 <span style="font-size:9.7px;color:#b5b5b5;margin-left:-2px">(-0.05%)</span></div>
<div class="a" style="left:710px;top:81.35px;font-size:11px;line-height:11px;color:#b5b5b5;text-decoration:line-through">$6.83</div>
<div class="a" style="left:0px;top:104.5px;width:896px;height:1px;background:#dde4ea;"></div>
<div class="a" style="left:20px;top:123.7px;width:11px;height:11px;border-radius:50%;background:#fff;border:1px solid #767676"></div>
<div class="a" style="left:45.6px;top:122.78px;font-size:13.2px;line-height:13.2px;color:#333;font-weight:400;">serv2</div>
<div class="a" style="left:153px;top:122.78px;font-size:13.2px;line-height:13.2px;color:#333;font-weight:400;">2</div>
<div class="a" style="left:244.5px;top:122.78px;font-size:13.2px;line-height:13.2px;color:#333;font-weight:400;">4 GB</div>
<div class="a" style="left:340.5px;top:122.78px;font-size:13.2px;line-height:13.2px;color:#333;font-weight:400;">40 GB</div>
<div class="a" style="left:431px;top:122.78px;font-size:13.2px;line-height:13.2px;color:#333;font-weight:400;">20 TB</div>
<div class="a" style="left:539px;top:122.53px;font-size:13.5px;line-height:13.5px;color:#333">$0.28 <span style="font-size:9.7px;color:#b5b5b5;margin-left:-2px">(-0.05%)</span></div>
<div class="a" style="left:710px;top:113.73px;font-size:13.5px;line-height:13.5px;color:#333">$8.38 <span style="font-size:9.7px;color:#b5b5b5;margin-left:-2px">(-0.05%)</span></div>
<div class="a" style="left:710px;top:133.85px;font-size:11px;line-height:11px;color:#b5b5b5;text-decoration:line-through">$8.38</div>
<div class="a" style="left:0px;top:157.0px;width:896px;height:1px;background:#dde4ea;"></div>
<div class="a" style="left:20px;top:176.2px;width:11px;height:11px;border-radius:50%;background:#fff;border:1px solid #767676"></div>
<div class="a" style="left:45.6px;top:175.28px;font-size:13.2px;line-height:13.2px;color:#333;font-weight:400;">serv2+</div>
<div class="a" style="left:153px;top:175.28px;font-size:13.2px;line-height:13.2px;color:#333;font-weight:400;">3</div>
<div class="a" style="left:244.5px;top:175.28px;font-size:13.2px;line-height:13.2px;color:#333;font-weight:400;">4 GB</div>
<div class="a" style="left:340.5px;top:175.28px;font-size:13.2px;line-height:13.2px;color:#333;font-weight:400;">80 GB</div>
<div class="a" style="left:431px;top:175.28px;font-size:13.2px;line-height:13.2px;color:#333;font-weight:400;">20 TB</div>
<div class="a" style="left:539px;top:175.03px;font-size:13.5px;line-height:13.5px;color:#333">$0.39 <span style="font-size:9.7px;color:#b5b5b5;margin-left:-2px">(-0.05%)</span></div>
<div class="a" style="left:710px;top:166.22px;font-size:13.5px;line-height:13.5px;color:#333">$11.8 <span style="font-size:9.7px;color:#b5b5b5;margin-left:-2px">(-0.05%)</span></div>
<div class="a" style="left:710px;top:186.35px;font-size:11px;line-height:11px;color:#b5b5b5;text-decoration:line-through">$11.8</div>
<div class="a" style="left:0px;top:209.5px;width:896px;height:1px;background:#dde4ea;"></div>
<div class="a" style="left:20px;top:228.7px;width:11px;height:11px;border-radius:50%;background:#fff;border:1px solid #767676"></div>
<div class="a" style="left:45.6px;top:227.78px;font-size:13.2px;line-height:13.2px;color:#333;font-weight:400;">serv3</div>
<div class="a" style="left:153px;top:227.78px;font-size:13.2px;line-height:13.2px;color:#333;font-weight:400;">2</div>
<div class="a" style="left:244.5px;top:227.78px;font-size:13.2px;line-height:13.2px;color:#333;font-weight:400;">8 GB</div>
<div class="a" style="left:340.5px;top:227.78px;font-size:13.2px;line-height:13.2px;color:#333;font-weight:400;">80 GB</div>
<div class="a" style="left:431px;top:227.78px;font-size:13.2px;line-height:13.2px;color:#333;font-weight:400;">20 TB</div>
<div class="a" style="left:539px;top:227.53px;font-size:13.5px;line-height:13.5px;color:#333">$0.51 <span style="font-size:9.7px;color:#b5b5b5;margin-left:-2px">(-0.05%)</span></div>
<div class="a" style="left:710px;top:218.72px;font-size:13.5px;line-height:13.5px;color:#333">$15.22 <span style="font-size:9.7px;color:#b5b5b5;margin-left:-2px">(-0.05%)</span></div>
<div class="a" style="left:710px;top:238.85px;font-size:11px;line-height:11px;color:#b5b5b5;text-decoration:line-through">$15.22</div>
<div class="a" style="left:0px;top:262.0px;width:896px;height:1px;background:#dde4ea;"></div>
<div class="a" style="left:20px;top:281.2px;width:11px;height:11px;border-radius:50%;background:#fff;border:1px solid #767676"></div>
<div class="a" style="left:45.6px;top:280.28px;font-size:13.2px;line-height:13.2px;color:#333;font-weight:400;">serv3+</div>
<div class="a" style="left:153px;top:280.28px;font-size:13.2px;line-height:13.2px;color:#333;font-weight:400;">4</div>
<div class="a" style="left:244.5px;top:280.28px;font-size:13.2px;line-height:13.2px;color:#333;font-weight:400;">8 GB</div>
<div class="a" style="left:340.5px;top:280.28px;font-size:13.2px;line-height:13.2px;color:#333;font-weight:400;">160 GB</div>
<div class="a" style="left:431px;top:280.28px;font-size:13.2px;line-height:13.2px;color:#333;font-weight:400;">20 TB</div>
<div class="a" style="left:539px;top:280.02px;font-size:13.5px;line-height:13.5px;color:#333">$0.71 <span style="font-size:9.7px;color:#b5b5b5;margin-left:-2px">(-0.05%)</span></div>
<div class="a" style="left:710px;top:271.22px;font-size:13.5px;line-height:13.5px;color:#333">$21.2 <span style="font-size:9.7px;color:#b5b5b5;margin-left:-2px">(-0.05%)</span></div>
<div class="a" style="left:710px;top:291.35px;font-size:11px;line-height:11px;color:#b5b5b5;text-decoration:line-through">$21.21</div>
<div class="a" style="left:0px;top:314.5px;width:896px;height:1px;background:#dde4ea;"></div>
<div class="a" style="left:20px;top:333.7px;width:11px;height:11px;border-radius:50%;background:#fff;border:1px solid #767676"></div>
<div class="a" style="left:45.6px;top:332.78px;font-size:13.2px;line-height:13.2px;color:#333;font-weight:400;">serv4</div>
<div class="a" style="left:153px;top:332.78px;font-size:13.2px;line-height:13.2px;color:#333;font-weight:400;">4</div>
<div class="a" style="left:244.5px;top:332.78px;font-size:13.2px;line-height:13.2px;color:#333;font-weight:400;">16 GB</div>
<div class="a" style="left:340.5px;top:332.78px;font-size:13.2px;line-height:13.2px;color:#333;font-weight:400;">160 GB</div>
<div class="a" style="left:431px;top:332.78px;font-size:13.2px;line-height:13.2px;color:#333;font-weight:400;">20 TB</div>
<div class="a" style="left:539px;top:332.52px;font-size:13.5px;line-height:13.5px;color:#333">$0.91 <span style="font-size:9.7px;color:#b5b5b5;margin-left:-2px">(-0.05%)</span></div>
<div class="a" style="left:710px;top:323.72px;font-size:13.5px;line-height:13.5px;color:#333">$27.19 <span style="font-size:9.7px;color:#b5b5b5;margin-left:-2px">(-0.05%)</span></div>
<div class="a" style="left:710px;top:343.85px;font-size:11px;line-height:11px;color:#b5b5b5;text-decoration:line-through">$27.2</div>
<div class="a" style="left:0px;top:367.0px;width:896px;height:1px;background:#dde4ea;"></div>
<div class="a" style="left:20px;top:386.2px;width:11px;height:11px;border-radius:50%;background:#fff;border:1px solid #767676"></div>
<div class="a" style="left:45.6px;top:385.28px;font-size:13.2px;line-height:13.2px;color:#333;font-weight:400;">serv5</div>
<div class="a" style="left:153px;top:385.28px;font-size:13.2px;line-height:13.2px;color:#333;font-weight:400;">8</div>
<div class="a" style="left:244.5px;top:385.28px;font-size:13.2px;line-height:13.2px;color:#333;font-weight:400;">32 GB</div>
<div class="a" style="left:340.5px;top:385.28px;font-size:13.2px;line-height:13.2px;color:#333;font-weight:400;">240 GB</div>
<div class="a" style="left:431px;top:385.28px;font-size:13.2px;line-height:13.2px;color:#333;font-weight:400;">20 TB</div>
<div class="a" style="left:539px;top:385.02px;font-size:13.5px;line-height:13.5px;color:#333">$1.82 <span style="font-size:9.7px;color:#b5b5b5;margin-left:-2px">(-0.05%)</span></div>
<div class="a" style="left:710px;top:376.22px;font-size:13.5px;line-height:13.5px;color:#333">$54.4 <span style="font-size:9.7px;color:#b5b5b5;margin-left:-2px">(-0.05%)</span></div>
<div class="a" style="left:710px;top:396.35px;font-size:11px;line-height:11px;color:#b5b5b5;text-decoration:line-through">$54.4</div>
</div>
<div class="a" style="left:1153px;top:513px;width:17px;height:360px;background:#f1f1f1;"></div>
<div class="a" style="left:1155px;top:530px;width:13px;height:224px;background:#c1c1c1;"></div>
<svg class="a" style="left:1157px;top:518px" width="9" height="6" viewBox="0 0 9 6"><path d="M0.5 5.5 L4.5 0.5 L8.5 5.5Z" fill="#a3a3a3"/></svg>
<svg class="a" style="left:1157px;top:861px" width="9" height="6" viewBox="0 0 9 6"><path d="M0.5 0.5 L4.5 5.5 L8.5 0.5Z" fill="#505050"/></svg>
<div class="a" style="left:257px;top:888px;width:913px;height:35px;background:#fafafa;border:1px solid #d6dfe7;border-radius:4px"></div>
<div class="a" style="left:269.5px;top:897.64px;font-size:13.6px;line-height:13.6px;color:#333;font-weight:400;">test</div>
<div class="a" style="left:1096px;top:937px;width:67px;height:34px;border-radius:17px;background:#06a8f6"></div>
<div class="a" style="left:1108.4px;top:946.74px;font-size:13.6px;line-height:13.6px;color:#fff;font-weight:700;">Create</div>
<!--/MAIN-->
<!--RIGHT-->
<div class="a" style="left:1214.2px;top:144.47px;font-size:16.5px;line-height:16.5px;color:#2b2f33;font-weight:400;letter-spacing:0.35px">My servers</div>
<div class="a" style="left:1214px;top:165px;width:87px;height:2px;background:#222;"></div>
<div class="a" style="left:1318.3px;top:144.47px;font-size:16.5px;line-height:16.5px;color:#6e7b87;font-weight:400;letter-spacing:0.4px">Snapshots</div>
<div class="a" style="left:1318px;top:166px;width:85px;height:1px;background:#333;"></div>
<div class="a" style="left:1420px;top:144.65px;font-size:16.3px;line-height:16.3px;color:#6e7b87;font-weight:400;letter-spacing:0.2px">SSDs</div>
<div class="a" style="left:1420px;top:166px;width:42px;height:1px;background:#333;"></div>
<div class="a" style="left:1479.5px;top:144.47px;font-size:16.5px;line-height:16.5px;color:#6e7b87;font-weight:400;letter-spacing:0.3px">IPs</div>
<div class="a" style="left:1479px;top:166px;width:25px;height:1px;background:#333;"></div>
<div class="a" style="left:1226px;top:196px;width:636px;height:36px;background:#f5f6f8;"></div>
<div class="a" style="left:1290.8px;top:207.21px;font-size:12.7px;line-height:12.7px;color:#2b2f33;font-weight:700;">Details</div>
<div class="a" style="left:1738.5px;top:207.38px;font-size:12.5px;line-height:12.5px;color:#2b2f33;font-weight:700;">Control</div>
<div class="a" style="left:1243.5px;top:333.5px;width:20px;height:20px;border-radius:50%;background:#8ad98e"></div>
<div class="a" style="left:1289.2px;top:253.25px;font-size:13px;line-height:13px;color:#333;font-weight:400;">test / serv1 / Socks5 proxy / Helsinki (Finland)</div>
<div class="a" style="left:1289.2px;top:272.05px;font-size:13px;line-height:13px;color:#333;font-weight:400;">1 vCPU / 2 GB RAM / 20 GB SSD</div>
<div class="a" style="left:1289.2px;top:290.85px;font-size:13px;line-height:13px;color:#333;font-weight:400;">IPv4: 65.21.3.193</div>
<div class="a" style="left:1289.2px;top:309.65px;font-size:13px;line-height:13px;color:#333;font-weight:400;">IPv6: 2a01:4f9:c010:2098::/64</div>
<div class="a" style="left:1289.2px;top:328.35px;font-size:13px;line-height:13px;color:#333;font-weight:400;">User: root</div>
<div class="a" style="left:1289.2px;top:347.05px;font-size:13px;line-height:13px;color:#333;font-weight:400;">Password: <span style="font-size:13px;position:relative;top:-2px;letter-spacing:-0.6px">**********</span></div>
<div class="a" style="left:1289.2px;top:366.05px;font-size:13px;line-height:13px;color:#333;font-weight:400;">Date of creation: 27.12.2021 04:54</div>
<div class="a" style="left:1289.2px;top:385.05px;font-size:13px;line-height:13px;color:#333;font-weight:400;">$0.2 <span style="font-size:9.7px;color:#b9b9b9">(-0.05%)</span> per day</div>
<div class="a" style="left:1289.2px;top:403.85px;font-size:13px;line-height:13px;color:#333;font-weight:400;">$5.97 <span style="font-size:9.7px;color:#b9b9b9">(-0.05%)</span> per month</div>
<div class="a" style="left:1289.2px;top:423.82px;font-size:10.8px;line-height:10.8px;color:#bdbdbd;font-weight:400;text-decoration:line-through">$5.97</div>
<svg class="a" style="left:1401px;top:347px" width="15" height="10" viewBox="0 0 15 10"><path d="M0.5 5 Q7.5 -2.5 14.5 5 Q7.5 12.5 0.5 5Z" fill="none" stroke="#777" stroke-width="1.2"/><circle cx="7.5" cy="5" r="2.6" fill="#777"/></svg>
<div class="a" style="left:1737.2px;top:261.45px;font-size:13px;line-height:13px;color:#3a7fc4;font-weight:400;">Console</div>
<div class="a" style="left:1737.2px;top:280.30px;font-size:13px;line-height:13px;color:#3a7fc4;font-weight:400;">Graphs</div>
<div class="a" style="left:1737.2px;top:299.15px;font-size:13px;line-height:13px;color:#3a7fc4;font-weight:400;">ISO images</div>
<div class="a" style="left:1737.2px;top:318.00px;font-size:13px;line-height:13px;color:#3a7fc4;font-weight:400;">Rename</div>
<div class="a" style="left:1737.2px;top:336.85px;font-size:13px;line-height:13px;color:#3a7fc4;font-weight:400;">Rebuild</div>
<div class="a" style="left:1737.2px;top:355.70px;font-size:13px;line-height:13px;color:#3a7fc4;font-weight:400;">Change</div>
<div class="a" style="left:1737.2px;top:374.55px;font-size:13px;line-height:13px;color:#3a7fc4;font-weight:400;">Snapshot</div>
<div class="a" style="left:1737.2px;top:393.40px;font-size:13px;line-height:13px;color:#3a7fc4;font-weight:400;">Power off</div>
<div class="a" style="left:1737.2px;top:431.88px;font-size:12.5px;line-height:12.5px;color:#e8344a;font-weight:400;">Delete</div>
<div class="a" style="left:1226.5px;top:514.72px;font-size:16.8px;line-height:16.8px;color:#2b2f33;font-weight:400;letter-spacing:0.5px">Useful links</div>
<div class="a" style="left:1226.5px;top:550.30px;font-size:14px;line-height:14px;color:#3d3f48;font-weight:400;">Blog</div>
<div class="a" style="left:1226px;top:565.4000000000001px;width:28px;height:1px;background:transparent;border-top:1px dotted #555"></div>
<div class="a" style="left:1226.5px;top:579.10px;font-size:14px;line-height:14px;color:#3d3f48;font-weight:400;">Knowledge base</div>
<div class="a" style="left:1226px;top:594.2px;width:105px;height:1px;background:transparent;border-top:1px dotted #555"></div>
<div class="a" style="left:1226.5px;top:607.90px;font-size:14px;line-height:14px;color:#3d3f48;font-weight:400;">Status</div>
<div class="a" style="left:1226px;top:623.0px;width:39px;height:1px;background:transparent;border-top:1px dotted #555"></div>
<div class="a" style="left:1226.5px;top:636.80px;font-size:14px;line-height:14px;color:#3d3f48;font-weight:400;">Testimonial</div>
<div class="a" style="left:1226px;top:651.9000000000001px;width:70px;height:1px;background:transparent;border-top:1px dotted #555"></div>
<div class="a" style="left:1226px;top:680.72px;font-size:16.8px;line-height:16.8px;color:#2b2f33;font-weight:400;letter-spacing:0.6px">Last comments</div>
<div class="a" style="left:1226px;top:717px;width:151px;height:12.8px;background:#f2efeb;"></div>
<div class="a" style="left:1226px;top:718.08px;font-size:10.5px;line-height:10.5px;color:#4a86c5;font-weight:400;">Winner youtu.be/QamCPhClvuU</div>
<div class="a" style="left:1226px;top:735.59px;font-size:10.6px;line-height:10.6px;color:#333;font-weight:400;">20% discount on servers for a month! <svg width="11" height="10" viewBox="0 0 11 10" style="vertical-align:-1px"><path d="M5.5 1 Q10.3 1 10.3 4.3 Q10.3 7.5 5.5 7.5 L4.5 7.5 L2 9.5 L2.5 7 Q0.7 6.2 0.7 4.3 Q0.7 1 5.5 1Z" fill="none" stroke="#333" stroke-width="0.9"/></svg> 1</div>
<svg class="a" style="left:1226px;top:750.0px" width="10" height="11" viewBox="0 0 10 11"><circle cx="5" cy="3.3" r="2.7" fill="none" stroke="#444" stroke-width="0.9"/><path d="M0.7 10.5 V9 Q0.7 6.5 3 6.2 H7 Q9.3 6.5 9.3 9 V10.5 Z" fill="none" stroke="#444" stroke-width="0.9"/></svg>
<div class="a" style="left:1238.4px;top:751.95px;font-size:11px;line-height:11px;color:#333;font-weight:400;letter-spacing:-0.68px">WEBDIVISION.PRO</div>
<div class="a" style="left:1226px;top:768.80px;font-size:10.7px;line-height:10.7px;color:#333;font-weight:400;">24 october 2020, 21:45</div>
<div class="a" style="left:1226px;top:792px;width:286px;height:12.8px;background:#f2efeb;"></div>
<div class="a" style="left:1226px;top:793.08px;font-size:10.5px;line-height:10.5px;color:#4a86c5;font-weight:400;">Work has begun on updating the server selection interface....</div>
<div class="a" style="left:1226px;top:810.59px;font-size:10.6px;line-height:10.6px;color:#333;font-weight:400;">Servers status <svg width="11" height="10" viewBox="0 0 11 10" style="vertical-align:-1px"><path d="M5.5 1 Q10.3 1 10.3 4.3 Q10.3 7.5 5.5 7.5 L4.5 7.5 L2 9.5 L2.5 7 Q0.7 6.2 0.7 4.3 Q0.7 1 5.5 1Z" fill="none" stroke="#333" stroke-width="0.9"/></svg> 2</div>
<svg class="a" style="left:1226px;top:825.0px" width="10" height="11" viewBox="0 0 10 11"><circle cx="5" cy="3.3" r="2.7" fill="none" stroke="#444" stroke-width="0.9"/><path d="M0.7 10.5 V9 Q0.7 6.5 3 6.2 H7 Q9.3 6.5 9.3 9 V10.5 Z" fill="none" stroke="#444" stroke-width="0.9"/></svg>
<div class="a" style="left:1238.4px;top:826.95px;font-size:11px;line-height:11px;color:#333;font-weight:400;letter-spacing:-0.68px">WEBDIVISION.PRO</div>
<div class="a" style="left:1226px;top:843.80px;font-size:10.7px;line-height:10.7px;color:#333;font-weight:400;">20 october 2020, 12:48</div>
<div class="a" style="left:1226px;top:877.12px;font-size:16.8px;line-height:16.8px;color:#2b2f33;font-weight:400;letter-spacing:0.6px">Recent posts</div>
<svg class="a" style="left:1226px;top:916px" width="72" height="54" viewBox="0 0 72 54">
<rect width="72" height="54" fill="#fcfcfd"/><rect width="72" height="4.3" fill="#1c1c1e"/><rect x="0" y="4.3" width="72" height="1.5" fill="#e9ecef"/><rect x="0" y="4.3" width="15" height="50" fill="#f6f7f9"/><rect x="15" y="4.3" width="0.6" height="50" fill="#dde3e8"/>
<rect x="0.5" y="5" width="7" height="2.2" fill="#555"/>
<rect x="1" y="8.5" width="2" height="1" fill="#3a8fd0"/><rect x="1" y="10.5" width="2" height="1" fill="#f0a040"/><rect x="1" y="12.5" width="2" height="1" fill="#3a8fd0"/><rect x="1" y="14.5" width="2" height="1" fill="#3dba4e"/><rect x="0" y="16.5" width="15" height="1.5" fill="#e6eaee"/><rect x="1" y="19" width="2" height="1" fill="#f04b4b"/><rect x="1" y="21" width="2" height="1" fill="#a56de8"/><rect x="1" y="23" width="2" height="1" fill="#aab"/><rect x="1" y="25" width="2" height="1" fill="#0aa3f5"/><rect x="1" y="27" width="2" height="1" fill="#f04050"/>
<rect x="4" y="8.5" width="6" height=".8" fill="#bbb"/><rect x="4" y="10.5" width="6" height=".8" fill="#bbb"/><rect x="4" y="12.5" width="6" height=".8" fill="#bbb"/><rect x="4" y="14.5" width="6" height=".8" fill="#bbb"/><rect x="4" y="19" width="6" height=".8" fill="#bbb"/><rect x="4" y="21" width="6" height=".8" fill="#bbb"/><rect x="4" y="23" width="8" height=".8" fill="#bbb"/>
<rect x="0.6" y="33" width="4" height="15.5" fill="#3a3a3a"/><rect x="4.8" y="35" width="4" height="13.5" fill="#444"/><rect x="9" y="37" width="3.5" height="11.5" fill="#3a3a3a"/><rect x="10" y="34" width="2" height="3" fill="#e8a030"/>
<rect x="17" y="9" width="9" height="1" fill="#999"/><rect x="17" y="12" width="4" height=".8" fill="#bbb"/><rect x="17" y="15.5" width="53" height="2.5" fill="#f4f4f6" stroke="#dde" stroke-width=".4"/><rect x="17" y="21.5" width="53" height="2.5" fill="#f4f4f6" stroke="#dde" stroke-width=".4"/>
<rect x="17" y="26" width="53" height="1.8" fill="#fff" stroke="#ccd" stroke-width=".4"/>
<rect x="17" y="28.5" width="53" height="1.6" fill="#3b95e8"/><rect x="17" y="30.2" width="53" height="3.6" fill="#cdeefc"/>
<rect x="17" y="35.5" width="53" height="1.6" fill="#eef0f3"/><rect x="17" y="39.5" width="53" height=".5" fill="#e2e2e2"/><rect x="17" y="43" width="53" height=".5" fill="#e2e2e2"/><rect x="17" y="46.5" width="53" height=".5" fill="#e2e2e2"/><rect x="17" y="50" width="53" height=".5" fill="#e2e2e2"/>
<rect x="20" y="38" width="3" height=".7" fill="#aaa"/><rect x="20" y="41.5" width="3" height=".7" fill="#aaa"/><rect x="20" y="45" width="3" height=".7" fill="#aaa"/><rect x="20" y="48.5" width="3" height=".7" fill="#aaa"/>
<rect x="60" y="38" width="4" height=".7" fill="#aaa"/><rect x="60" y="41.5" width="4" height=".7" fill="#aaa"/><rect x="60" y="45" width="4" height=".7" fill="#aaa"/><rect x="60" y="48.5" width="4" height=".7" fill="#aaa"/>
</svg>
<svg class="a" style="left:1226px;top:978px" width="72" height="54" viewBox="0 0 72 54">
<rect width="72" height="54" fill="#f7f8f9"/><rect width="72" height="8.5" fill="#1fb0e8"/><path d="M0 0 H29 L25 8.5 H0Z" fill="#0e5aa6"/><rect x="4" y="2" width="10" height="1.2" fill="#9cd"/><rect x="4" y="5" width="10" height="1.2" fill="#9cd"/><rect x="44" y="3" width="24" height="1.8" fill="#bfe6f7"/>
<rect x="0" y="8.5" width="72" height="4.6" fill="#2c8ad8"/>
<rect x="0" y="13.1" width="72" height="3.3" fill="#e3e5e8"/><rect x="0" y="19.7" width="72" height="3.3" fill="#e3e5e8"/><rect x="0" y="26.3" width="72" height="3.3" fill="#e3e5e8"/><rect x="0" y="32.9" width="72" height="3.3" fill="#e3e5e8"/><rect x="0" y="39.5" width="72" height="3.3" fill="#e3e5e8"/>
<rect x="3" y="43.5" width="4" height=".8" fill="#3a8fd0"/><rect x="11" y="43.5" width="20" height=".8" fill="#3a8fd0"/><rect x="52" y="43.5" width="5" height=".8" fill="#888"/><rect x="65" y="43.5" width="5" height=".8" fill="#888"/>
<rect x="0" y="45" width="72" height="9" fill="#2f82cc"/><rect x="3" y="47.5" width="28" height=".9" fill="#7fb5e5"/><rect x="40" y="47.5" width="28" height=".9" fill="#7fb5e5"/><rect x="3" y="50" width="28" height=".9" fill="#7fb5e5"/><rect x="40" y="50" width="28" height=".9" fill="#7fb5e5"/>
</svg>
<div class="a" style="left:1316px;top:919.38px;font-size:12.5px;line-height:12.5px;color:#3a85c8;font-weight:400;">New server location</div>
<div class="a" style="left:1316px;top:941px;width:546px;height:1px;background:#cfcfcf;"></div>
<div class="a" style="left:1316px;top:947.64px;font-size:9.6px;line-height:9.6px;color:#a9a9a9;font-weight:700;">08 november 2021, 18:44</div>
<div class="a" style="left:1316px;top:981.44px;font-size:12.3px;line-height:12.3px;color:#3a85c8;font-weight:400;">Important information for users...</div>
<div class="a" style="left:1316px;top:1004px;width:546px;height:1px;background:#cfcfcf;"></div>
<div class="a" style="left:1316px;top:1009.84px;font-size:9.6px;line-height:9.6px;color:#a9a9a9;font-weight:700;">06 august 2021, 02:18</div>
<!--/RIGHT-->
<!--ANNO-->
<svg class="a" style="left:0;top:0;pointer-events:none" width="1920" height="1040" viewBox="0 0 1920 1040">
<rect x="247.6" y="214.6" width="932.8" height="68.6" fill="none" stroke="#ed1c24" stroke-width="4.8"/>
<rect x="241.4" y="877.8" width="101.1" height="56.6" fill="none" stroke="#ed1c24" stroke-width="4.8"/>
<rect x="1078.3" y="930.3" width="95.1" height="48.1" fill="none" stroke="#ed1c24" stroke-width="4.6"/>
<rect x="1221.2" y="189.2" width="646.5" height="266.6" fill="none" stroke="#ed1c24" stroke-width="4.4"/>
<path d="M248.0 283.5 L243.7 293.5 L239.7 303.6 L235.5 313.6 L231.2 323.7 L226.9 333.7 L222.6 343.8 L218.2 353.8 L213.9 363.8 L209.6 373.9 L205.4 383.9 L201.3 394.0 L197.3 404.0 L193.4 414.1 L189.8 424.1 L186.3 434.1 L183.1 444.2 L180.1 454.2 L177.5 464.3 L175.0 474.3 L172.9 484.3 L171.1 494.4 L169.6 504.4 L168.5 514.5 L167.6 524.5 L167.1 534.6 L166.9 544.6 L167.1 554.6 L167.5 564.7 L168.3 574.7 L169.3 584.8 L170.6 594.8 L172.2 604.9 L174.0 614.9 L176.0 624.9 L178.2 635.0 L180.6 645.0 L183.1 655.1 L185.7 665.1 L188.4 675.2 L191.1 685.2 L194.0 695.2 L196.8 705.3 L199.6 715.3 L202.4 725.4 L205.1 735.4 L207.8 745.4 L210.4 755.5 L212.9 765.5 L215.4 775.6 L217.7 785.6 L220.0 795.7 L222.3 805.7 L224.5 815.7 L226.8 825.8 L229.1 835.8 L231.6 845.9 L234.2 855.9 L237.0 866.0 L240.6 876.0" fill="none" stroke="#ed1c24" stroke-width="4.2" stroke-linecap="round" stroke-linejoin="round"/>
<path d="M241.9 839 L240.8 876 L220.4 851.6" fill="none" stroke="#ed1c24" stroke-width="4.2" stroke-linecap="round" stroke-linejoin="round"/>
<path d="M344 915.7 L1078 951.4" fill="none" stroke="#ed1c24" stroke-width="4.2" stroke-linecap="round"/>
<path d="M1038.6 940.3 L1078 951.4 L1038.6 962" fill="none" stroke="#ed1c24" stroke-width="4.2" stroke-linecap="round" stroke-linejoin="round"/>
<path d="M1174 928 L1221.6 458" fill="none" stroke="#ed1c24" stroke-width="4.4" stroke-linecap="round"/>
<path d="M1208 488 L1221.6 458 L1227.5 488.75" fill="none" stroke="#ed1c24" stroke-width="4.4" stroke-linecap="round" stroke-linejoin="round"/>
<path d="M224.5 182.5 L237.5 170.5 V206 M223.5 205.3 H246.5" fill="none" stroke="#ed1c24" stroke-width="5" stroke-linejoin="miter"/>
<path d="M205.5 924.5 Q210 920 216 920 Q226 920 226 930 Q226 936 220 942 L206.5 955.5 H228.5" fill="none" stroke="#ed1c24" stroke-width="4.6" stroke-linejoin="round"/>
<path d="M1087 885.5 Q1091 882.5 1096.5 882.5 Q1106 882.5 1106 891 Q1106 899.5 1094 900 Q1108 900 1108.5 910 Q1108.5 920 1097 920 Q1090 920 1086 916.5" fill="none" stroke="#ed1c24" stroke-width="4.6" stroke-linejoin="round"/>
<path d="M1604 185 V147.5 H1600.5 L1586 173.5 H1612.5" fill="none" stroke="#ed1c24" stroke-width="5.2" stroke-linejoin="round"/>
</svg>
<!--/ANNO-->
</body></html>
